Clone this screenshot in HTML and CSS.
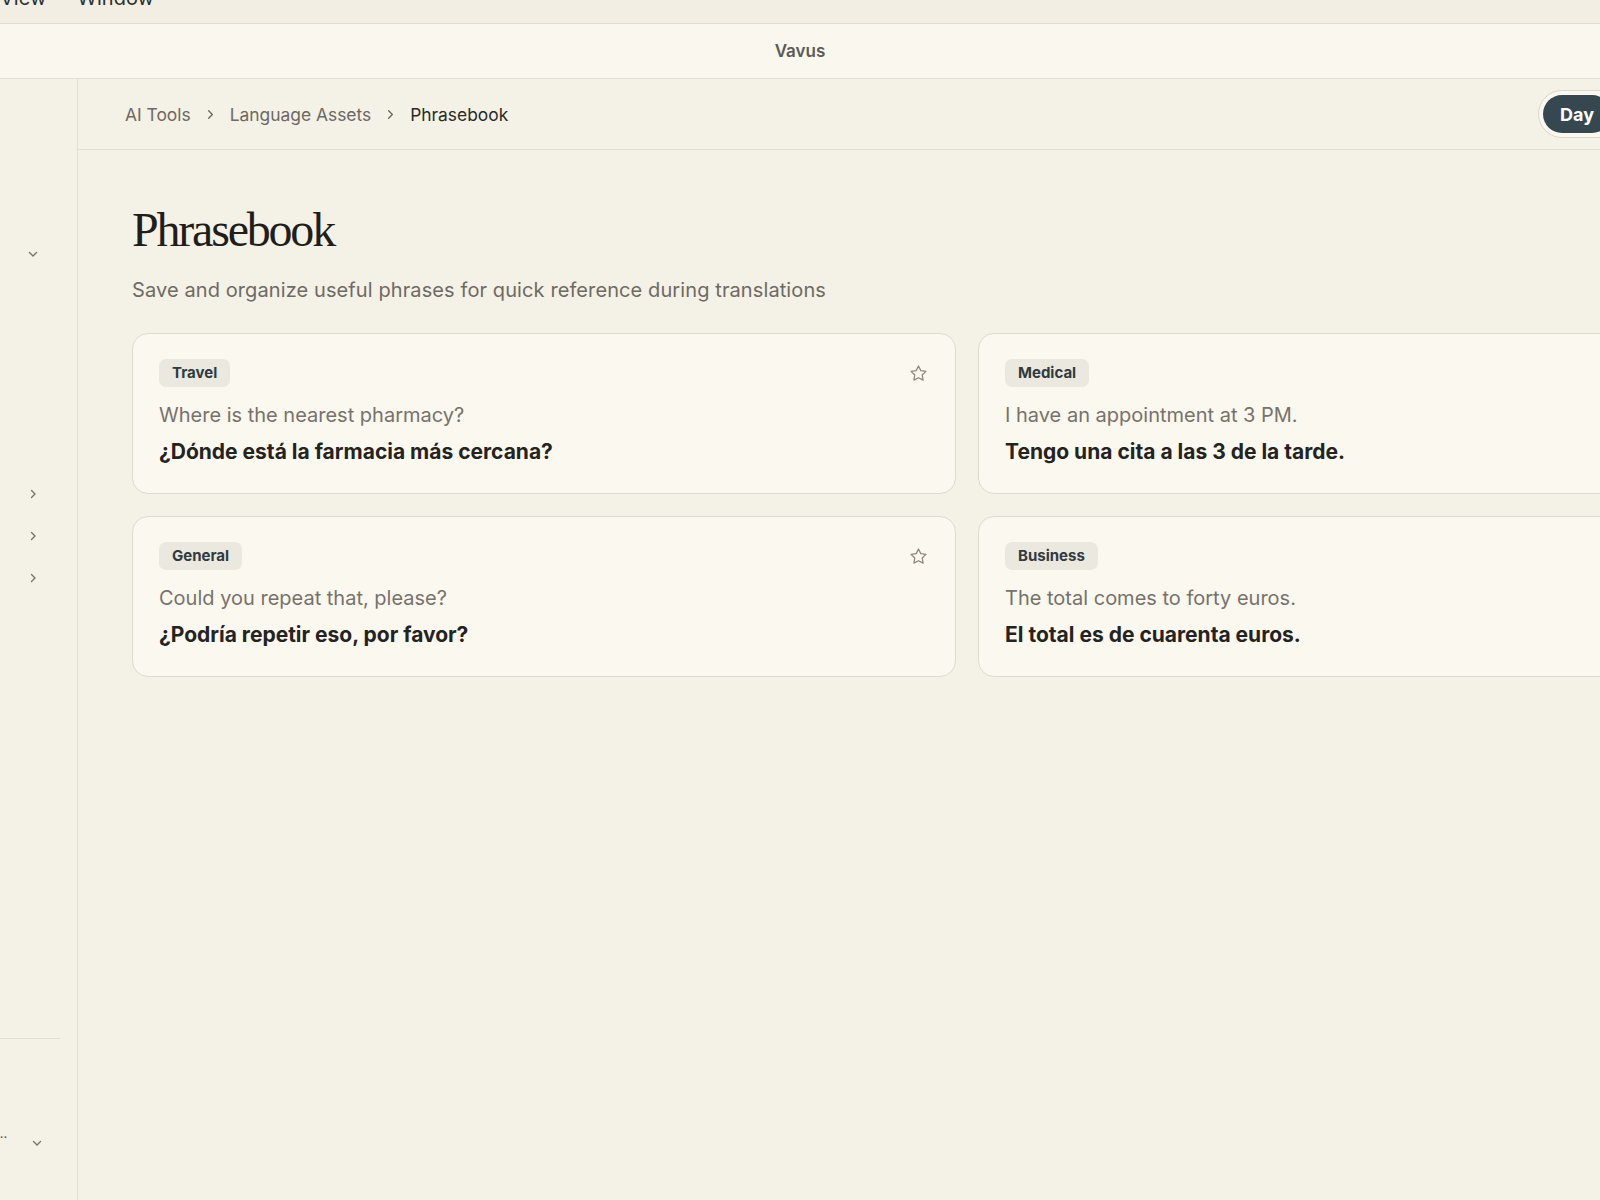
FILE: index.html
```html
<!DOCTYPE html>
<html lang="en">
<head>
  <meta charset="UTF-8">
  <meta name="viewport" content="width=device-width, initial-scale=1.0">
  <title>Vavus - Phrasebook</title>
  <link rel="stylesheet" href="styles.css">
</head>
<body>
  <div class="menubar">
    <span class="menu-item">View</span>
    <span class="menu-item">Window</span>
  </div>
  <div class="titlebar">Vavus</div>

  <div class="app">
    <aside class="sidebar">
      <div class="nav-row first">
        <svg class="chev" viewBox="0 0 12 12"><polyline points="2.5,4.5 6,8 9.5,4.5"/></svg>
      </div>
      <div class="nav-spacer"></div>
      <div class="nav-row">
        <svg class="chev" viewBox="0 0 12 12"><polyline points="4.5,2.5 8,6 4.5,9.5"/></svg>
      </div>
      <div class="nav-row">
        <svg class="chev" viewBox="0 0 12 12"><polyline points="4.5,2.5 8,6 4.5,9.5"/></svg>
      </div>
      <div class="nav-row">
        <svg class="chev" viewBox="0 0 12 12"><polyline points="4.5,2.5 8,6 4.5,9.5"/></svg>
      </div>

      <div class="sidebar-footer">
        <div class="account">
          <span class="account-name">…</span>
          <svg class="chev" viewBox="0 0 12 12"><polyline points="2.5,4.5 6,8 9.5,4.5"/></svg>
        </div>
      </div>
    </aside>

    <main class="main">
      <div class="topbar">
        <nav class="crumbs">
          <a href="#">AI Tools</a>
          <svg class="crumb-sep" viewBox="0 0 12 12"><polyline points="4,2 8,6 4,10"/></svg>
          <a href="#">Language Assets</a>
          <svg class="crumb-sep" viewBox="0 0 12 12"><polyline points="4,2 8,6 4,10"/></svg>
          <span class="current">Phrasebook</span>
        </nav>
        <div class="theme-toggle">
          <button class="toggle-btn active">Day</button>
          <button class="toggle-btn">Night</button>
        </div>
      </div>

      <section class="content">
        <h1 class="page-title">Phrasebook</h1>
        <p class="lead">Save and organize useful phrases for quick reference during translations</p>

        <div class="phrase-grid">
          <div class="phrase-card">
            <div class="card-head">
              <span class="tag">Travel</span>
              <svg class="star" viewBox="0 0 24 24"><polygon points="12,2.5 14.9,8.4 21.4,9.3 16.7,13.9 17.8,20.3 12,17.3 6.2,20.3 7.3,13.9 2.6,9.3 9.1,8.4"/></svg>
            </div>
            <p class="source">Where is the nearest pharmacy?</p>
            <p class="target">¿Dónde está la farmacia más cercana?</p>
          </div>

          <div class="phrase-card">
            <div class="card-head">
              <span class="tag">Medical</span>
              <svg class="star" viewBox="0 0 24 24"><polygon points="12,2.5 14.9,8.4 21.4,9.3 16.7,13.9 17.8,20.3 12,17.3 6.2,20.3 7.3,13.9 2.6,9.3 9.1,8.4"/></svg>
            </div>
            <p class="source">I have an appointment at 3 PM.</p>
            <p class="target">Tengo una cita a las 3 de la tarde.</p>
          </div>

          <div class="phrase-card">
            <div class="card-head">
              <span class="tag">General</span>
              <svg class="star" viewBox="0 0 24 24"><polygon points="12,2.5 14.9,8.4 21.4,9.3 16.7,13.9 17.8,20.3 12,17.3 6.2,20.3 7.3,13.9 2.6,9.3 9.1,8.4"/></svg>
            </div>
            <p class="source">Could you repeat that, please?</p>
            <p class="target">¿Podría repetir eso, por favor?</p>
          </div>

          <div class="phrase-card">
            <div class="card-head">
              <span class="tag">Business</span>
              <svg class="star" viewBox="0 0 24 24"><polygon points="12,2.5 14.9,8.4 21.4,9.3 16.7,13.9 17.8,20.3 12,17.3 6.2,20.3 7.3,13.9 2.6,9.3 9.1,8.4"/></svg>
            </div>
            <p class="source">The total comes to forty euros.</p>
            <p class="target">El total es de cuarenta euros.</p>
          </div>
        </div>
      </section>
    </main>
  </div>
</body>
</html>
```

FILE: styles.css
```css
body {
  margin: 0;
  width: 1600px;
  height: 1200px;
  overflow: hidden;
  background-color: #f4f1e7;
  font-family: Inter, "Noto Sans", sans-serif;
  color: #24231f;
}

/* window chrome */
.menubar {
  height: 23px;
  display: flex;
  gap: 31px;
  overflow: hidden;
  background-color: #f2eee3;
  border-bottom: 1px solid #e2ddd1;
}
.menu-item {
  font-size: 20px;
  line-height: 20px;
  margin-top: -12px;
  color: #2f2f2d;
}
.titlebar {
  height: 54px;
  display: flex;
  align-items: center;
  justify-content: center;
  background-color: #faf7ef;
  border-bottom: 1px solid #e3dfd3;
  font-size: 17px;
  font-weight: 600;
  color: #5c5a55;
}

.app {
  display: flex;
  height: 1121px;
}

/* sidebar */
.sidebar {
  width: 77px;
  flex-shrink: 0;
  display: flex;
  flex-direction: column;
  border-right: 1px solid #e3dfd3;
}
.nav-row {
  height: 42px;
  display: flex;
  align-items: center;
  justify-content: flex-end;
  padding-right: 38px;
}
.nav-row.first {
  margin-top: 154px;
}
.nav-spacer {
  height: 198px;
}
.chev {
  width: 12px;
  height: 12px;
  fill: none;
  stroke: #77736c;
  stroke-width: 1.4;
  stroke-linecap: round;
  stroke-linejoin: round;
}
.sidebar-footer {
  margin-top: auto;
  height: 161px;
  margin-right: 17px;
  border-top: 1px solid #e3dfd3;
}
.account {
  display: flex;
  align-items: center;
  justify-content: space-between;
  padding-top: 98px;
  padding-right: 17px;
}
.account-name {
  font-size: 13px;
  line-height: 14px;
  margin-left: -4px;
  margin-top: -20px;
  color: #55524d;
}

/* main */
.main {
  width: 1778px;
  flex-shrink: 0;
  display: flex;
  flex-direction: column;
}
.topbar {
  height: 70px;
  display: grid;
  grid-template-columns: 1413px auto;
  align-items: center;
  padding-left: 47px;
  border-bottom: 1px solid #e3dfd3;
}
.crumbs {
  display: flex;
  align-items: center;
  gap: 14px;
  font-size: 17.4px;
  color: #6d6963;
}
.crumbs a {
  color: #6d6963;
  text-decoration: none;
}
.crumbs .current {
  color: #2a2a27;
}
.crumb-sep {
  width: 11px;
  height: 11px;
  fill: none;
  stroke: #6d6963;
  stroke-width: 1.5;
  stroke-linecap: round;
  stroke-linejoin: round;
}
.theme-toggle {
  display: flex;
  align-items: center;
  padding: 4px;
  border: 1px solid #dcd7cb;
  border-radius: 24px;
  background-color: #fbf8f1;
  justify-self: start;
}
.toggle-btn {
  height: 38px;
  padding: 0 17px;
  border: none;
  border-radius: 19px;
  background: none;
  font-family: Inter, sans-serif;
  font-size: 18px;
  font-weight: 700;
  color: #6d6963;
}
.toggle-btn.active {
  background-color: #364750;
  color: #ffffff;
}

.content {
  padding: 0 54px;
}
.page-title {
  margin: 52px 0 0;
  font-family: "Liberation Serif", "DejaVu Serif", serif;
  font-size: 48px;
  line-height: 56px;
  font-weight: 400;
  letter-spacing: -2.2px;
  color: #1f1e1b;
}
.lead {
  margin: 18px 0 0;
  font-size: 20px;
  line-height: 28px;
  letter-spacing: 0.1px;
  color: #6e6a63;
}

.phrase-grid {
  display: grid;
  grid-template-columns: repeat(2, 1fr);
  gap: 22px;
  margin-top: 29px;
}
.phrase-card {
  box-sizing: border-box;
  padding: 25px 27px 27px 26px;
  background-color: #fbf8f0;
  border: 1px solid #dedace;
  border-radius: 16px;
}
.card-head {
  display: flex;
  align-items: center;
  justify-content: space-between;
}
.tag {
  height: 28px;
  line-height: 28px;
  padding: 0 13px;
  border-radius: 7px;
  background-color: #ebe8df;
  font-size: 15px;
  font-weight: 700;
  color: #2f3b41;
}
.star {
  width: 19px;
  height: 19px;
  fill: none;
  stroke: #8c877f;
  stroke-width: 1.6;
  stroke-linejoin: round;
}
.source {
  margin: 14px 0 0;
  font-size: 20px;
  line-height: 28px;
  color: #77726b;
}
.target {
  margin: 9px 0 0;
  font-size: 21px;
  line-height: 28px;
  font-weight: 700;
  color: #24231f;
}
```
